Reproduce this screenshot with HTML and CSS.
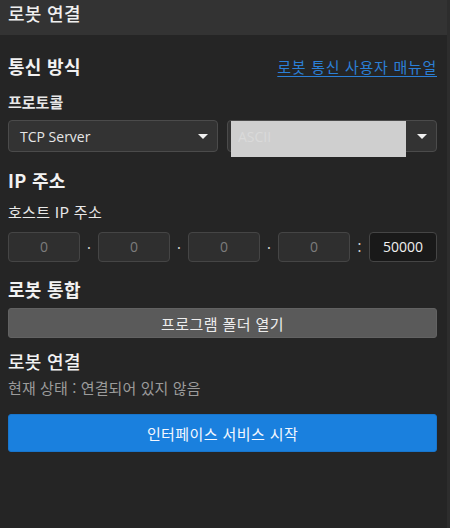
FILE: index.html
```html
<!DOCTYPE html>
<html lang="ko">
<head>
<meta charset="UTF-8">
<title>로봇 연결</title>
<link rel="stylesheet" href="styles.css">
</head>
<body>
<div class="frame">
	<div class="panel">
		<div class="panel-head">로봇 연결</div>

		<div class="panel-body">
			<div class="row-title">
				<h2 class="heading">통신 방식</h2>
				<a class="manual" href="#">로봇 통신 사용자 매뉴얼</a>
			</div>

			<div class="label label-bold">프로토콜</div>
			<div class="select-row">
				<div class="select">
					<span>TCP Server</span>
					<i class="caret"></i>
				</div>
				<div class="select">
					<span>ASCII</span>
					<i class="caret"></i>
					<div class="mask">ASCII</div>
				</div>
			</div>

			<h2 class="heading gap-ip">IP 주소</h2>
			<div class="label sub">호스트 IP 주소</div>
			<div class="ip-row">
				<div class="ip-box">0</div>
				<span class="sep">·</span>
				<div class="ip-box">0</div>
				<span class="sep">·</span>
				<div class="ip-box">0</div>
				<span class="sep">·</span>
				<div class="ip-box">0</div>
				<span class="sep">:</span>
				<div class="ip-box port">50000</div>
			</div>

			<h2 class="heading gap-robot">로봇 통합</h2>
			<button class="btn btn-gray">프로그램 폴더 열기</button>

			<h2 class="heading gap-conn">로봇 연결</h2>
			<div class="status">현재 상태 : 연결되어 있지 않음</div>

			<button class="btn btn-blue">인터페이스 서비스 시작</button>
		</div>
	</div>
	<div class="scroll-edge"></div>
</div>
</body>
</html>
```
FILE: styles.css
```css
html, body {
	margin: 0;
	padding: 0;
	height: 100%;
	background: #252525;
}

body {
	font-family: "Noto Sans CJK KR", "Noto Sans", sans-serif;
	color: #e8e8e8;
	font-size: 14px;
}

.frame {
	display: flex;
	height: 528px;
}

.panel {
	flex: 1;
	background: #252525;
}

.scroll-edge {
	width: 3px;
	background: #2d2d2d;
}

.panel-head {
	height: 35px;
	background: #333333;
	padding: 0 8px;
	font-size: 18px;
	font-weight: 500;
	letter-spacing: 0.3px;
	line-height: 26px;
	color: #f0f0f0;
	box-sizing: border-box;
}

.panel-body {
	padding: 19px 10px 0 8px;
}

.row-title {
	display: flex;
	justify-content: space-between;
	align-items: center;
	height: 24px;
}

.heading {
	margin: 0;
	font-size: 18px;
	font-weight: 700;
	letter-spacing: 0.3px;
	line-height: 24px;
	color: #f2f2f2;
}

.manual {
	color: #2b7fd6;
	font-size: 15px;
	letter-spacing: 0.7px;
	text-decoration: underline;
	text-underline-offset: 3px;
}

.label {
	font-size: 14px;
	line-height: 20px;
}

.label-bold {
	margin-top: 14px;
	font-size: 15px;
	font-weight: 700;
}

.select-row {
	display: grid;
	grid-template-columns: 1fr 1fr;
	gap: 9px;
	margin-top: 8px;
}

.select {
	position: relative;
	height: 32px;
	box-sizing: border-box;
	border: 1px solid #4b4b4b;
	border-radius: 4px;
	background: #333333;
	display: flex;
	align-items: center;
	justify-content: space-between;
	padding: 0 8px 0 11px;
	font-family: "Open Sans", "Noto Sans", sans-serif;
	font-size: 14px;
	color: #e6e6e6;
}

.caret {
	width: 0;
	height: 0;
	border-left: 5px solid transparent;
	border-right: 5px solid transparent;
	border-top: 5px solid #f0f0f0;
	margin-right: 1px;
}

/* grey cover over the data format field */
.mask {
	position: absolute;
	left: 3px;
	top: 0;
	width: 175px;
	height: 36px;
	background: #cfcfcf;
	color: #dadada;
	font-family: "Open Sans", "Noto Sans", sans-serif;
	font-size: 14px;
	line-height: 32px;
	padding-left: 7px;
	box-sizing: border-box;
}

.gap-ip {
	margin-top: 16px;
}

.sub {
	margin-top: 10px;
	font-size: 15px;
	letter-spacing: 0.3px;
}

.ip-row {
	display: grid;
	grid-template-columns: 72px 18px 72px 18px 72px 18px 72px 19px 1fr;
	margin-top: 10px;
	height: 30px;
}

.ip-box {
	box-sizing: border-box;
	border: 1px solid #454545;
	border-radius: 4px;
	background: #2f2f2f;
	color: #7c7c7c;
	font-family: "Open Sans", "Noto Sans", sans-serif;
	font-size: 14px;
	text-align: center;
	line-height: 28px;
}

.ip-box.port {
	background: #191919;
	color: #f0f0f0;
}

.sep {
	text-align: center;
	line-height: 30px;
	color: #cfcfcf;
	font-size: 14px;
}

.gap-robot {
	margin-top: 15px;
}

.btn {
	display: block;
	width: 100%;
	border-radius: 3px;
	font-family: "Noto Sans CJK KR", "Noto Sans", sans-serif;
	font-size: 15px;
	letter-spacing: 0.4px;
	cursor: pointer;
}

.btn-gray {
	margin-top: 7px;
	height: 30px;
	background: #5a5a5a;
	border: 1px solid #626262;
	color: #ededed;
	padding: 0;
}

.gap-conn {
	margin-top: 11px;
	font-weight: 500;
}

.status {
	margin-top: 5px;
	line-height: 20px;
	color: #9b9b9b;
	font-size: 15px;
	letter-spacing: 0.1px;
}

.btn-blue {
	margin-top: 16px;
	height: 38px;
	background: #1a80de;
	border: 1px solid #1875cc;
	color: #f4f8ff;
	padding: 0;
}
```
